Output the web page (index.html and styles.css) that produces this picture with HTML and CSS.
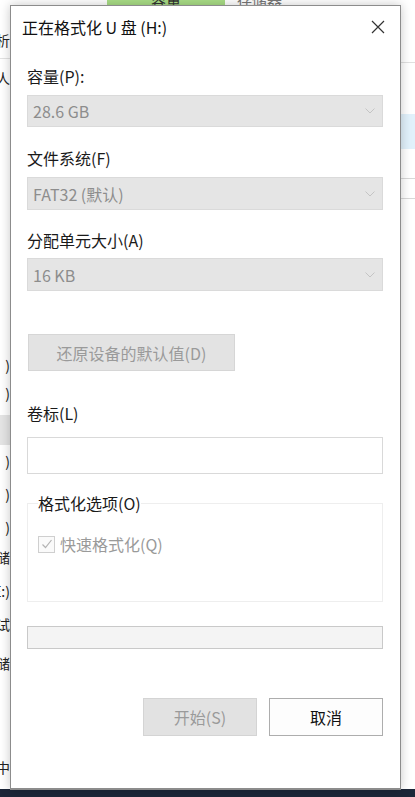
FILE: index.html
```html
<!DOCTYPE html>
<html lang="zh-CN">
<head>
<meta charset="utf-8">
<title>正在格式化 U 盘 (H:)</title>
<link rel="stylesheet" href="styles.css">
</head>
<body>
<div class="backdrop">
  <div class="bd-top">
    <div class="bd-tab">容量</div>
    <div class="bd-tab-text">存储器</div>
  </div>
  <div class="bd-body">
    <div class="bd-left">
      <div class="bd-row r1">分析</div>
      <div class="bd-line"></div>
      <div class="bd-row r2">人</div>
      <div class="bd-row r3">)</div>
      <div class="bd-row r4">)</div>
      <div class="bd-block"></div>
      <div class="bd-row r5">)</div>
      <div class="bd-row r6">)</div>
      <div class="bd-row r7">)</div>
      <div class="bd-row r8">存储</div>
      <div class="bd-row r9">E:)</div>
      <div class="bd-row r10">测试</div>
      <div class="bd-row r11">存储</div>
      <div class="bd-row r12">中</div>
    </div>
    <div class="bd-right">
      <div class="bd-rline l1"></div>
      <div class="bd-blue"></div>
      <div class="bd-rline l2"></div>
      <div class="bd-rline l3"></div>
    </div>
  </div>
  <div class="taskbar"></div>
</div>

<div class="dialog">
  <div class="titlebar">
    <span class="title">正在格式化 U 盘 (H:)</span>
    <svg class="close" width="14" height="14" viewBox="0 0 14 14"><path d="M1 1L13 13M13 1L1 13" stroke="#333" stroke-width="1.2" fill="none"/></svg>
  </div>
  <div class="content">
    <div class="label l-cap">容量(P):</div>
    <div class="select s1"><span>28.6 GB</span><svg class="chev" width="10" height="6" viewBox="0 0 10 6"><path d="M0.5 0.5L5 5L9.5 0.5" stroke="#c4c4c4" stroke-width="1" fill="none"/></svg></div>

    <div class="label l-fs">文件系统(F)</div>
    <div class="select s2"><span>FAT32 (默认)</span><svg class="chev" width="10" height="6" viewBox="0 0 10 6"><path d="M0.5 0.5L5 5L9.5 0.5" stroke="#c4c4c4" stroke-width="1" fill="none"/></svg></div>

    <div class="label l-au">分配单元大小(A)</div>
    <div class="select s3"><span>16 KB</span><svg class="chev" width="10" height="6" viewBox="0 0 10 6"><path d="M0.5 0.5L5 5L9.5 0.5" stroke="#c4c4c4" stroke-width="1" fill="none"/></svg></div>

    <div class="btn btn-restore">还原设备的默认值(D)</div>

    <div class="label l-vol">卷标(L)</div>
    <div class="input"></div>

    <fieldset class="group">
      <legend>格式化选项(O)</legend>
      <div class="check-row">
        <span class="checkbox"><svg width="14" height="14" viewBox="0 0 14 14"><path d="M2.5 7.5L5.5 10.5L11.5 3" stroke="#b3b3b3" stroke-width="1.2" fill="none"/></svg></span>
        <span class="check-text">快速格式化(Q)</span>
      </div>
    </fieldset>

    <div class="progress"></div>

    <div class="actions">
      <div class="btn btn-start">开始(S)</div>
      <div class="btn btn-cancel">取消</div>
    </div>
  </div>
</div>
</body>
</html>
```

FILE: styles.css
```css
* { box-sizing: border-box; }
html, body {
  margin: 0;
  padding: 0;
  width: 415px;
  height: 797px;
  overflow: hidden;
  background: #ffffff;
  font-family: "Noto Sans CJK SC", "Noto Sans", sans-serif;
}

/* ----- backdrop window ----- */
.backdrop {
  width: 415px;
  height: 797px;
  display: flex;
  flex-direction: column;
  background: #ffffff;
}
.bd-top {
  height: 8px;
  display: flex;
  align-items: flex-end;
  overflow: hidden;
}
.bd-tab {
  margin-left: 107px;
  width: 118px;
  height: 14px;
  background: #a9dd86;
  color: #333;
  font-size: 15px;
  line-height: 12px;
  text-align: center;
  overflow: hidden;
}
.bd-tab-text {
  margin-left: 12px;
  font-size: 15px;
  color: #777;
  line-height: 12px;
  height: 14px;
  overflow: hidden;
}
.bd-body {
  flex: 1;
  display: flex;
  justify-content: space-between;
}
.bd-left {
  width: 12px;
  display: flex;
  flex-direction: column;
  align-items: flex-end;
  font-size: 14px;
  color: #222;
  overflow: hidden;
}
.bd-row {
  height: 20px;
  line-height: 20px;
  white-space: nowrap;
  display: flex;
  justify-content: flex-end;
  width: 12px;
  overflow: hidden;
  padding-right: 2px;
}
.r1 { margin-top: 22px; }
.bd-line { width: 12px; height: 1px; background: #e2e2e2; margin-top: 8px; }
.r2 { margin-top: 9px; }
.r3 { margin-top: 267px; }
.r4 { margin-top: 8px; }
.bd-block { width: 12px; height: 30px; background: #e4e4e4; margin-top: 12px; }
.r5 { margin-top: 6px; }
.r6 { margin-top: 13px; }
.r7 { margin-top: 13px; }
.r8 { margin-top: 10px; }
.r9 { margin-top: 14px; }
.r10 { margin-top: 13px; }
.r11 { margin-top: 19px; }
.r12 { margin-top: 84px; }

.bd-right {
  width: 16px;
  display: flex;
  flex-direction: column;
}
.bd-rline { height: 1px; background: #e0e0e0; }
.l1 { margin-top: 54px; }
.bd-blue { height: 35px; margin-top: 51px; background: #e1f1fb; }
.l2 { margin-top: 29px; background: #d8d8d8; }
.l3 { margin-top: 19px; background: #d8d8d8; }

.taskbar {
  height: 8px;
  background: #1c2638;
}

/* ----- dialog ----- */
.dialog {
  position: absolute;
  left: 10px;
  top: 5px;
  width: 391px;
  height: 785px;
  background: #ffffff;
  border: 1px solid #8c8c8c;
  border-bottom-width: 2px;
  box-shadow: 0 0 10px rgba(0, 0, 0, 0.22);
  display: flex;
  flex-direction: column;
}
.titlebar {
  height: 44px;
  display: flex;
  align-items: center;
  justify-content: space-between;
  padding: 0 15px 0 11px;
}
.title {
  font-size: 16px;
  color: #111;
  line-height: 20px;
  margin-top: -2px;
}
.close { margin-top: -3px; }

.content {
  padding: 0 17px 0 16px;
  display: flex;
  flex-direction: column;
}
.label {
  font-size: 16px;
  line-height: 20px;
  color: #1a1a1a;
}
.l-cap { margin-top: 16px; }
.l-fs { margin-top: 21px; }
.l-au { margin-top: 20px; }
.l-vol { margin-top: 32px; }

.select {
  height: 33px;
  background: #e5e5e5;
  border: 1px solid #dadada;
  display: flex;
  align-items: center;
  justify-content: space-between;
  padding: 0 7px 0 5px;
  font-size: 16px;
  color: #8d8d8d;
}
.s1 { margin-top: 9px; height: 32px; }
.s2 { margin-top: 9px; }
.s3 { margin-top: 8px; }

.btn {
  display: flex;
  align-items: center;
  justify-content: center;
  font-size: 16px;
}
.btn-restore {
  margin-top: 43px;
  margin-left: 1px;
  width: 207px;
  height: 37px;
  background: #e3e3e3;
  border: 1px solid #d6d6d6;
  color: #9a9a9a;
}

.input {
  margin-top: 14px;
  height: 37px;
  border: 1px solid #d9d9d9;
  background: #ffffff;
}

.group {
  margin: 19px 0 0 0;
  padding: 0 10px 0 10px;
  height: 109px;
  border: 1px solid #eeeeee;
  min-width: 0;
}
.group legend {
  padding: 0;
  font-size: 16px;
  line-height: 20px;
  color: #1a1a1a;
}
.check-row {
  display: flex;
  align-items: center;
  margin-top: 21px;
}
.checkbox {
  width: 17px;
  height: 17px;
  border: 1px solid #cfcfcf;
  display: flex;
  align-items: center;
  justify-content: center;
  background: #fafafa;
}
.check-text {
  margin-left: 5px;
  font-size: 16px;
  line-height: 20px;
  color: #9a9a9a;
}

.progress {
  margin-top: 24px;
  height: 23px;
  border: 1px solid #c9c9c9;
  background: #f4f4f4;
}

.actions {
  margin-top: 49px;
  display: flex;
  justify-content: flex-end;
  gap: 12px;
}
.btn-start {
  width: 114px;
  height: 38px;
  background: #e2e2e2;
  border: 1px solid #d4d4d4;
  color: #9a9a9a;
}
.btn-cancel {
  width: 114px;
  height: 38px;
  background: #fdfdfd;
  border: 1px solid #adadad;
  color: #111;
}
```
